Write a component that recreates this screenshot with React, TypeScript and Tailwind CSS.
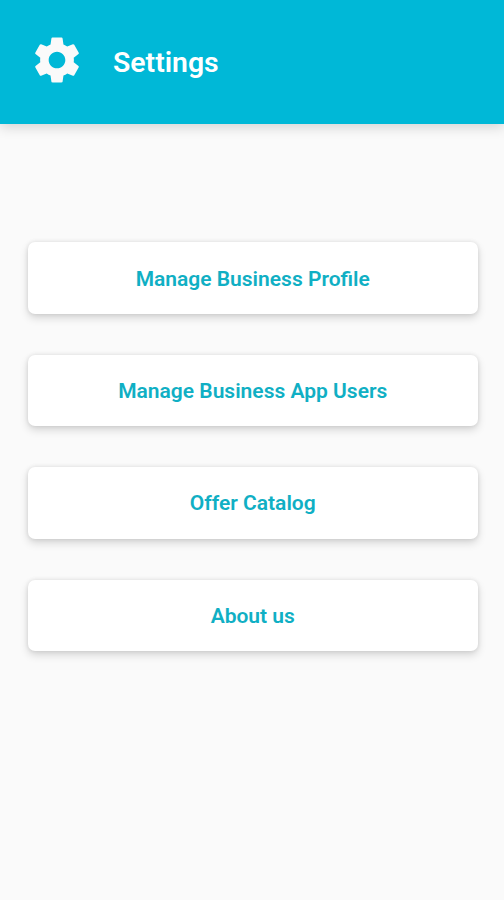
const menuItems = [
  { id: 'profile', label: 'Manage Business Profile' },
  { id: 'users', label: 'Manage Business App Users' },
  { id: 'catalog', label: 'Offer Catalog' },
  { id: 'about', label: 'About us' },
];

function GearIcon({ className }: { className?: string }) {
  return (
    <svg viewBox="0 0 24 24" fill="currentColor" className={className} aria-hidden="true">
      <path d="M19.43 12.98c.04-.32.07-.64.07-.98s-.03-.66-.07-.98l2.11-1.65c.19-.15.24-.42.12-.64l-2-3.46c-.12-.22-.39-.3-.61-.22l-2.49 1c-.52-.4-1.08-.73-1.69-.98l-.38-2.65C14.46 2.18 14.25 2 14 2h-4c-.25 0-.46.18-.49.42l-.38 2.65c-.61.25-1.17.59-1.69.98l-2.49-1c-.23-.09-.49 0-.61.22l-2 3.46c-.13.22-.07.49.12.64l2.11 1.65c-.04.32-.07.65-.07.98s.03.66.07.98l-2.11 1.65c-.19.15-.24.42-.12.64l2 3.46c.12.22.39.3.61.22l2.49-1c.52.4 1.08.73 1.69.98l.38 2.65c.03.24.24.42.49.42h4c.25 0 .46-.18.49-.42l.38-2.65c.61-.25 1.17-.59 1.69-.98l2.49 1c.23.09.49 0 .61-.22l2-3.46c.12-.22.07-.49-.12-.64l-2.11-1.65zM12 15.7c-2.04 0-3.7-1.66-3.7-3.7s1.66-3.7 3.7-3.7 3.7 1.66 3.7 3.7-1.66 3.7-3.7 3.7z" />
    </svg>
  );
}

function Header() {
  return (
    <header className="flex h-[123.5px] items-center bg-[#00b8d7] pl-[30px] text-white shadow-[0_3px_12px_rgba(0,0,0,0.16)]">
      <GearIcon className="-mt-1 h-[54px] w-[54px] text-[#fafafa]" />
      <h1 className="mt-0.5 ml-[29px] text-[28.4px] leading-8 font-semibold">Settings</h1>
    </header>
  );
}

export default function App() {
  return (
    <div className="min-h-screen bg-[#fafafa] font-['Roboto',sans-serif]">
      <Header />
      <main className="flex flex-col gap-[41px] pt-[118.9px] pr-[26.5px] pl-7">
        {menuItems.map((item) => (
          <button
            key={item.id}
            type="button"
            className="h-[71.4px] w-full rounded-[7px] bg-white pt-[2.5px] text-[21px] font-semibold text-[#10afc4] shadow-[0_4px_8px_rgba(0,0,0,0.15),0_0_4px_rgba(0,0,0,0.1)]"
          >
            {item.label}
          </button>
        ))}
      </main>
    </div>
  );
}
